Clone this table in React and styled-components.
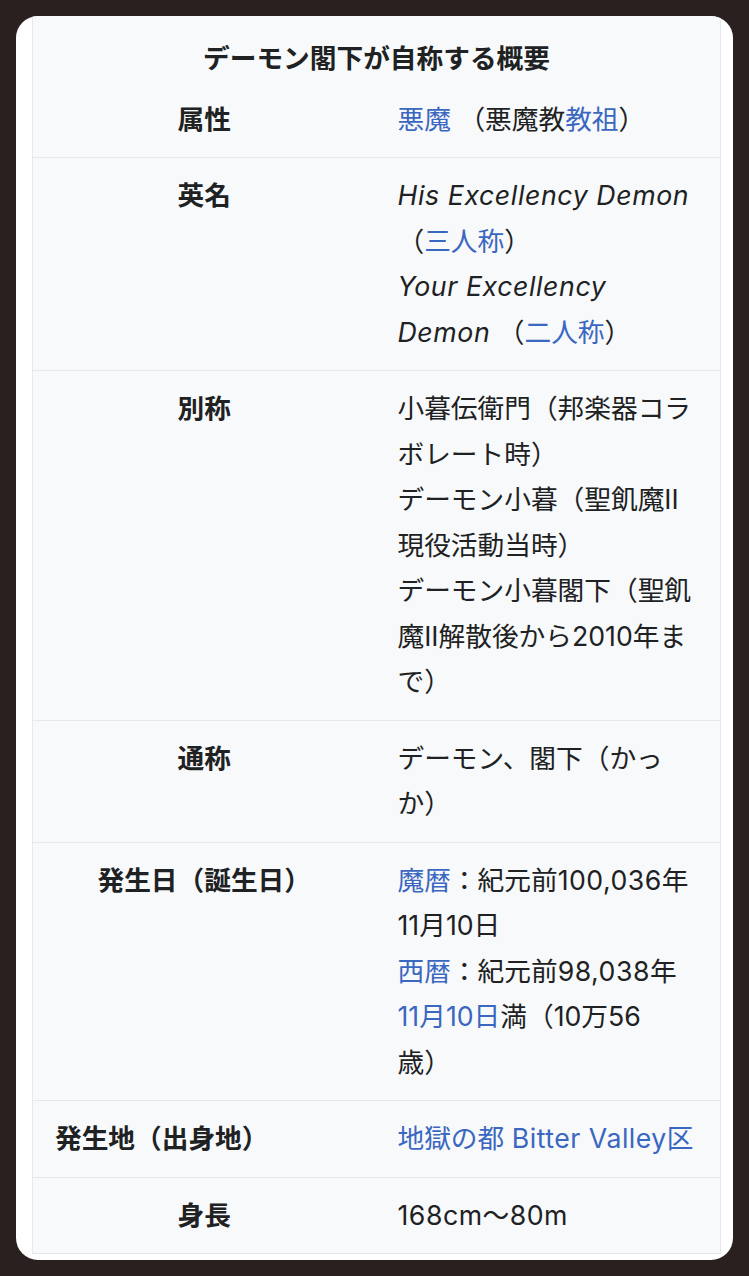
import styled, { createGlobalStyle } from "styled-components";

const GlobalStyle = createGlobalStyle`
  html, body {
    margin: 0;
    padding: 0;
    background: #2a2020;
  }
  body {
    font-family: "Inter", "Noto Sans CJK JP", sans-serif;
    color: #202122;
  }
`;

const Page = styled.div`
  padding: 16px;
  height: 1276px;
  box-sizing: border-box;
`;

const Card = styled.div`
  height: 100%;
  background: #ffffff;
  border-radius: 22px;
  overflow: hidden;
  padding: 0 12px 0 16px;
  box-sizing: border-box;
`;

const Table = styled.table`
  width: 100%;
  border-collapse: collapse;
  background: #f8f9fa;
  border: 1px solid #e6e8ec;
  border-top: none;
  table-layout: fixed;
  font-size: 26.7px;
  line-height: 45.5px;
`;

const Caption = styled.caption`
  background: #f8f9fa;
  border-left: 1px solid #e6e8ec;
  border-right: 1px solid #e6e8ec;
  font-weight: 700;
  padding: 20px 0 0;
  text-align: center;
`;

const Row = styled.tr`
  border-top: 1px solid #e6e8ec;

  &:first-child {
    border-top: none;
  }
`;

const Label = styled.th`
  width: 343px;
  box-sizing: border-box;
  padding: 15px 22px;
  vertical-align: top;
  font-weight: 700;
  text-align: ${({ $align }) => $align || "center"};
  white-space: nowrap;
`;

const Value = styled.td`
  padding: 15px 26px 15px 22px;
  vertical-align: top;
  text-align: left;
`;

const Link = styled.span`
  color: #3a67c0;
`;

const Latin = styled.span`
  letter-spacing: 0.5px;
`;

const En = styled.i`
  font-style: italic;
  letter-spacing: 0.6px;
`;

const Line = styled.div``;

export default function App() {
  return (
    <>
      <GlobalStyle />
      <Page>
        <Card>
          <Table>
            <Caption>デーモン閣下が自称する概要</Caption>
            <tbody>
              <Row>
                <Label>属性</Label>
                <Value>
                  <Link>悪魔</Link> （悪魔教<Link>教祖</Link>）
                </Value>
              </Row>
              <Row>
                <Label>英名</Label>
                <Value>
                  <Line>
                    <En>His Excellency Demon</En> （<Link>三人称</Link>）
                  </Line>
                  <Line>
                    <En>Your Excellency Demon</En> （<Link>二人称</Link>）
                  </Line>
                </Value>
              </Row>
              <Row>
                <Label>別称</Label>
                <Value>
                  <Line>小暮伝衛門（邦楽器コラボレート時）</Line>
                  <Line>デーモン小暮（聖飢魔II現役活動当時）</Line>
                  <Line>デーモン小暮閣下（聖飢魔II解散後から2010年まで）</Line>
                </Value>
              </Row>
              <Row>
                <Label>通称</Label>
                <Value>デーモン、閣下（かっか）</Value>
              </Row>
              <Row>
                <Label>発生日（誕生日）</Label>
                <Value>
                  <Line>
                    <Link>魔暦</Link>：紀元前<Latin>100,036</Latin>年11月10日
                  </Line>
                  <Line>
                    <Link>西暦</Link>：紀元前<Latin>98,038</Latin>年
                    <Link>11月10日</Link>満（10万56
                    <br />
                    歳）
                  </Line>
                </Value>
              </Row>
              <Row>
                <Label $align="left">発生地（出身地）</Label>
                <Value>
                  <Link>
                    地獄の都 <Latin>Bitter Valley</Latin>区
                  </Link>
                </Value>
              </Row>
              <Row>
                <Label>身長</Label>
                <Value>
                  <Latin>168cm〜80m</Latin>
                </Value>
              </Row>
            </tbody>
          </Table>
        </Card>
      </Page>
    </>
  );
}
